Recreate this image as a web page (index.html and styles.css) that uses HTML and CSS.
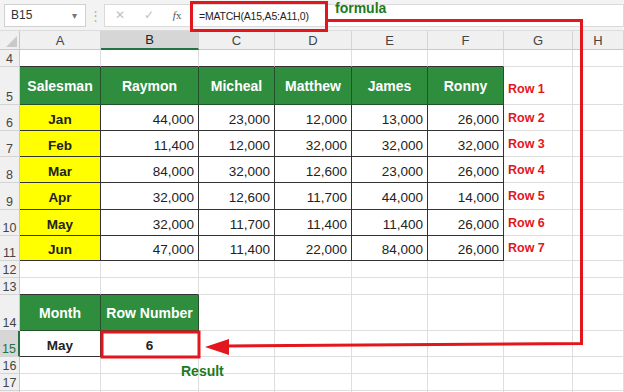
FILE: index.html
```html
<!DOCTYPE html>
<html>
<head>
    <title>MATCH example</title>
    <link rel="stylesheet" href="styles.css">
</head>
<body>
    <div class="sheet">
        <div class="formula-bar">
            <div class="name-box">B15<span class="drop">&#9662;</span></div>
            <div class="dots">&#8942;</div>
            <div class="fx-buttons">
                <span class="fx-btn">&#10005;</span>
                <span class="fx-btn">&#10003;</span>
                <span class="fx-btn fx"><i>f</i>x</span>
            </div>
            <div class="formula-input">=MATCH(A15,A5:A11,0)</div>
        </div>

        <table class="grid">
            <colgroup>
                <col class="c-rh"><col class="c-a"><col class="c-b"><col class="c-c"><col class="c-d"><col class="c-e"><col class="c-f"><col class="c-g"><col class="c-h">
            </colgroup>
            <tr class="r-head">
                <td class="corner"><span class="tri"></span></td>
                <td class="ch">A</td><td class="ch sel">B</td><td class="ch">C</td><td class="ch">D</td><td class="ch">E</td><td class="ch">F</td><td class="ch">G</td><td class="ch">H</td>
            </tr>
            <tr class="r-s">
                <td class="rh">4</td>
                <td class="tb"></td><td class="tb"></td><td class="tb"></td><td class="tb"></td><td class="tb"></td><td class="tb"></td><td></td><td></td>
            </tr>
            <tr class="r-5">
                <td class="rh">5</td>
                <td class="hd">Salesman</td><td class="hd">Raymon</td><td class="hd">Micheal</td><td class="hd">Matthew</td><td class="hd">James</td><td class="hd">Ronny</td>
                <td class="note low">Row 1</td><td></td>
            </tr>
            <tr class="r-d">
                <td class="rh">6</td>
                <td class="mo">Jan</td><td class="num">44,000</td><td class="num">23,000</td><td class="num">12,000</td><td class="num">13,000</td><td class="num">26,000</td>
                <td class="note">Row 2</td><td></td>
            </tr>
            <tr class="r-d">
                <td class="rh">7</td>
                <td class="mo">Feb</td><td class="num">11,400</td><td class="num">12,000</td><td class="num">32,000</td><td class="num">32,000</td><td class="num">32,000</td>
                <td class="note">Row 3</td><td></td>
            </tr>
            <tr class="r-d">
                <td class="rh">8</td>
                <td class="mo">Mar</td><td class="num">84,000</td><td class="num">32,000</td><td class="num">12,600</td><td class="num">23,000</td><td class="num">26,000</td>
                <td class="note">Row 4</td><td></td>
            </tr>
            <tr class="r-d9">
                <td class="rh">9</td>
                <td class="mo">Apr</td><td class="num">32,000</td><td class="num">12,600</td><td class="num">11,700</td><td class="num">44,000</td><td class="num">14,000</td>
                <td class="note">Row 5</td><td></td>
            </tr>
            <tr class="r-d">
                <td class="rh">10</td>
                <td class="mo">May</td><td class="num">32,000</td><td class="num">11,700</td><td class="num">11,400</td><td class="num">11,400</td><td class="num">26,000</td>
                <td class="note">Row 6</td><td></td>
            </tr>
            <tr class="r-d11">
                <td class="rh">11</td>
                <td class="mo">Jun</td><td class="num">47,000</td><td class="num">11,400</td><td class="num">22,000</td><td class="num">84,000</td><td class="num">26,000</td>
                <td class="note">Row 7</td><td></td>
            </tr>
            <tr class="r-s">
                <td class="rh">12</td>
                <td></td><td></td><td></td><td></td><td></td><td></td><td></td><td></td>
            </tr>
            <tr class="r-s">
                <td class="rh">13</td>
                <td class="tb"></td><td class="tb"></td><td></td><td></td><td></td><td></td><td></td><td></td>
            </tr>
            <tr class="r-14">
                <td class="rh">14</td>
                <td class="hd">Month</td><td class="hd">Row Number</td><td></td><td></td><td></td><td></td><td></td><td></td>
            </tr>
            <tr class="r-d">
                <td class="rh sel">15</td>
                <td class="res">May</td><td class="res">6</td><td></td><td></td><td></td><td></td><td></td><td></td>
            </tr>
            <tr class="r-s">
                <td class="rh">16</td>
                <td></td><td></td><td></td><td></td><td></td><td></td><td></td><td></td>
            </tr>
            <tr class="r-s">
                <td class="rh">17</td>
                <td></td><td></td><td></td><td></td><td></td><td></td><td></td><td></td>
            </tr>
            <tr class="r-s">
                <td class="rh"></td>
                <td></td><td></td><td></td><td></td><td></td><td></td><td></td><td></td>
            </tr>
        </table>

        <!-- red callout drawn over the sheet -->
        <svg class="callout" width="624" height="392" viewBox="0 0 624 392">
            <rect x="191.5" y="2.5" width="135" height="28" fill="none" stroke="#e3161d" stroke-width="3"/>
            <polyline points="327,20.5 581.5,20.5 581.5,343.5 226,346" fill="none" stroke="#e3161d" stroke-width="3"/>
            <polygon points="205,347 229,339 229,355" fill="#e3161d"/>
            <rect x="102" y="332" width="97" height="25" fill="none" stroke="#e3161d" stroke-width="3"/>
        </svg>
        <span class="label label-formula">formula</span>
        <span class="label label-result">Result</span>
    </div>
</body>
</html>
```

FILE: styles.css
```css
html, body {
    margin: 0;
    padding: 0;
    background: #ffffff;
}
.sheet {
    position: relative;
    width: 624px;
    height: 392px;
    overflow: hidden;
    font-family: "Liberation Sans", Arial, sans-serif;
    font-size: 13.5px;
    color: #222;
}

/* formula bar */
.formula-bar {
    display: flex;
    align-items: center;
    height: 31px;
    background: #f3f3f3;
    box-sizing: border-box;
    border-bottom: 1px solid #dcdcdc;
}
.name-box {
    display: flex;
    align-items: center;
    justify-content: space-between;
    width: 82px;
    height: 23px;
    margin-left: 4px;
    padding: 0 8px 0 6px;
    box-sizing: border-box;
    background: #fff;
    border: 1px solid #d0d0d0;
    font-size: 12px;
    color: #333;
}
.drop {
    font-size: 10px;
    color: #777;
}
.dots {
    width: 18px;
    text-align: center;
    color: #b5b5b5;
    font-size: 13px;
}
.fx-buttons {
    display: flex;
    align-items: center;
    justify-content: space-around;
    width: 87px;
    height: 23px;
    background: #fff;
    border: 1px solid #dadada;
    border-right: none;
    box-sizing: border-box;
}
.fx-btn {
    color: #c2c2c2;
    font-size: 12px;
}
.fx-btn.fx {
    color: #555;
    font-family: "Liberation Serif", serif;
    font-size: 11px;
}
.formula-input {
    flex: 1;
    height: 23px;
    line-height: 23px;
    padding-left: 8px;
    background: #fff;
    border: 1px solid #dadada;
    border-left: none;
    box-sizing: border-box;
    font-size: 10.5px;
    letter-spacing: -0.2px;
    color: #222;
}

/* grid */
.grid {
    border-collapse: separate;
    border-spacing: 0;
    table-layout: fixed;
    width: 624px;
}
.grid td {
    padding: 0 4px;
    border-right: 1px solid #dedede;
    border-bottom: 1px solid #dedede;
    white-space: nowrap;
    overflow: hidden;
    box-sizing: border-box;
}
.c-rh { width: 20px; }
.c-a { width: 81px; }
.c-b { width: 98px; }
.c-c { width: 76px; }
.c-d { width: 77px; }
.c-e { width: 76px; }
.c-f { width: 76px; }
.c-g { width: 69px; }
.c-h { width: 51px; }

.r-head { height: 19px; }
.r-s { height: 17px; }
.r-5 { height: 38px; }
.r-d { height: 26px; }
.r-d9 { height: 27px; }
.r-d11 { height: 25px; }
.r-14 { height: 36px; }

.corner {
    position: relative;
    background: #f0f0f0;
    border-right-color: #c8c8c8 !important;
    border-bottom-color: #c8c8c8 !important;
}
.tri {
    position: absolute;
    right: 2px;
    bottom: 2px;
    border-left: 11px solid transparent;
    border-bottom: 11px solid #c9c9c9;
}
.ch {
    background: #f0f0f0;
    text-align: center;
    color: #444;
    font-size: 13px;
    border-bottom-color: #c8c8c8 !important;
    border-right-color: #d4d4d4 !important;
}
.ch.sel {
    background: #d6d6d6;
    border-bottom: 2px solid #217346 !important;
    color: #222;
}
.rh {
    background: #f0f0f0;
    color: #444;
    font-size: 12.5px;
    text-align: center;
    vertical-align: bottom;
    padding: 0 !important;
    border-right-color: #c8c8c8 !important;
    border-bottom-color: #d4d4d4 !important;
}
.rh.sel {
    background: #d6d6d6;
    color: #217346;
    border-right: 2px solid #217346 !important;
}

.grid td.tb {
    border-bottom-color: #333;
}
.grid td.hd {
    background: #2f8e3e;
    color: #fff;
    font-weight: bold;
    text-align: center;
    font-size: 14px;
    border-right-color: #24512b;
    border-bottom-color: #24512b;
}
.grid td.mo {
    background: #ffff00;
    font-weight: bold;
    text-align: center;
    padding-top: 3px;
    border-right-color: #333;
    border-bottom-color: #333;
}
.grid td.num {
    text-align: right;
    padding-top: 3px;
    border-right-color: #333;
    border-bottom-color: #333;
}
.grid td.res {
    font-weight: bold;
    text-align: center;
    padding-top: 3px;
    border-right-color: #333;
    border-bottom-color: #333;
}
.note {
    color: #e3161d;
    font-weight: bold;
    font-size: 12.5px;
    padding-left: 4px !important;
}
.note.low {
    padding-top: 6px;
}

/* annotations */
.callout {
    position: absolute;
    left: 0;
    top: 0;
    pointer-events: none;
}
.label {
    position: absolute;
    color: #1c7a1e;
    font-weight: bold;
    font-size: 14px;
}
.label-formula {
    left: 335px;
    top: 0;
}
.label-result {
    left: 181px;
    top: 363px;
}
```
